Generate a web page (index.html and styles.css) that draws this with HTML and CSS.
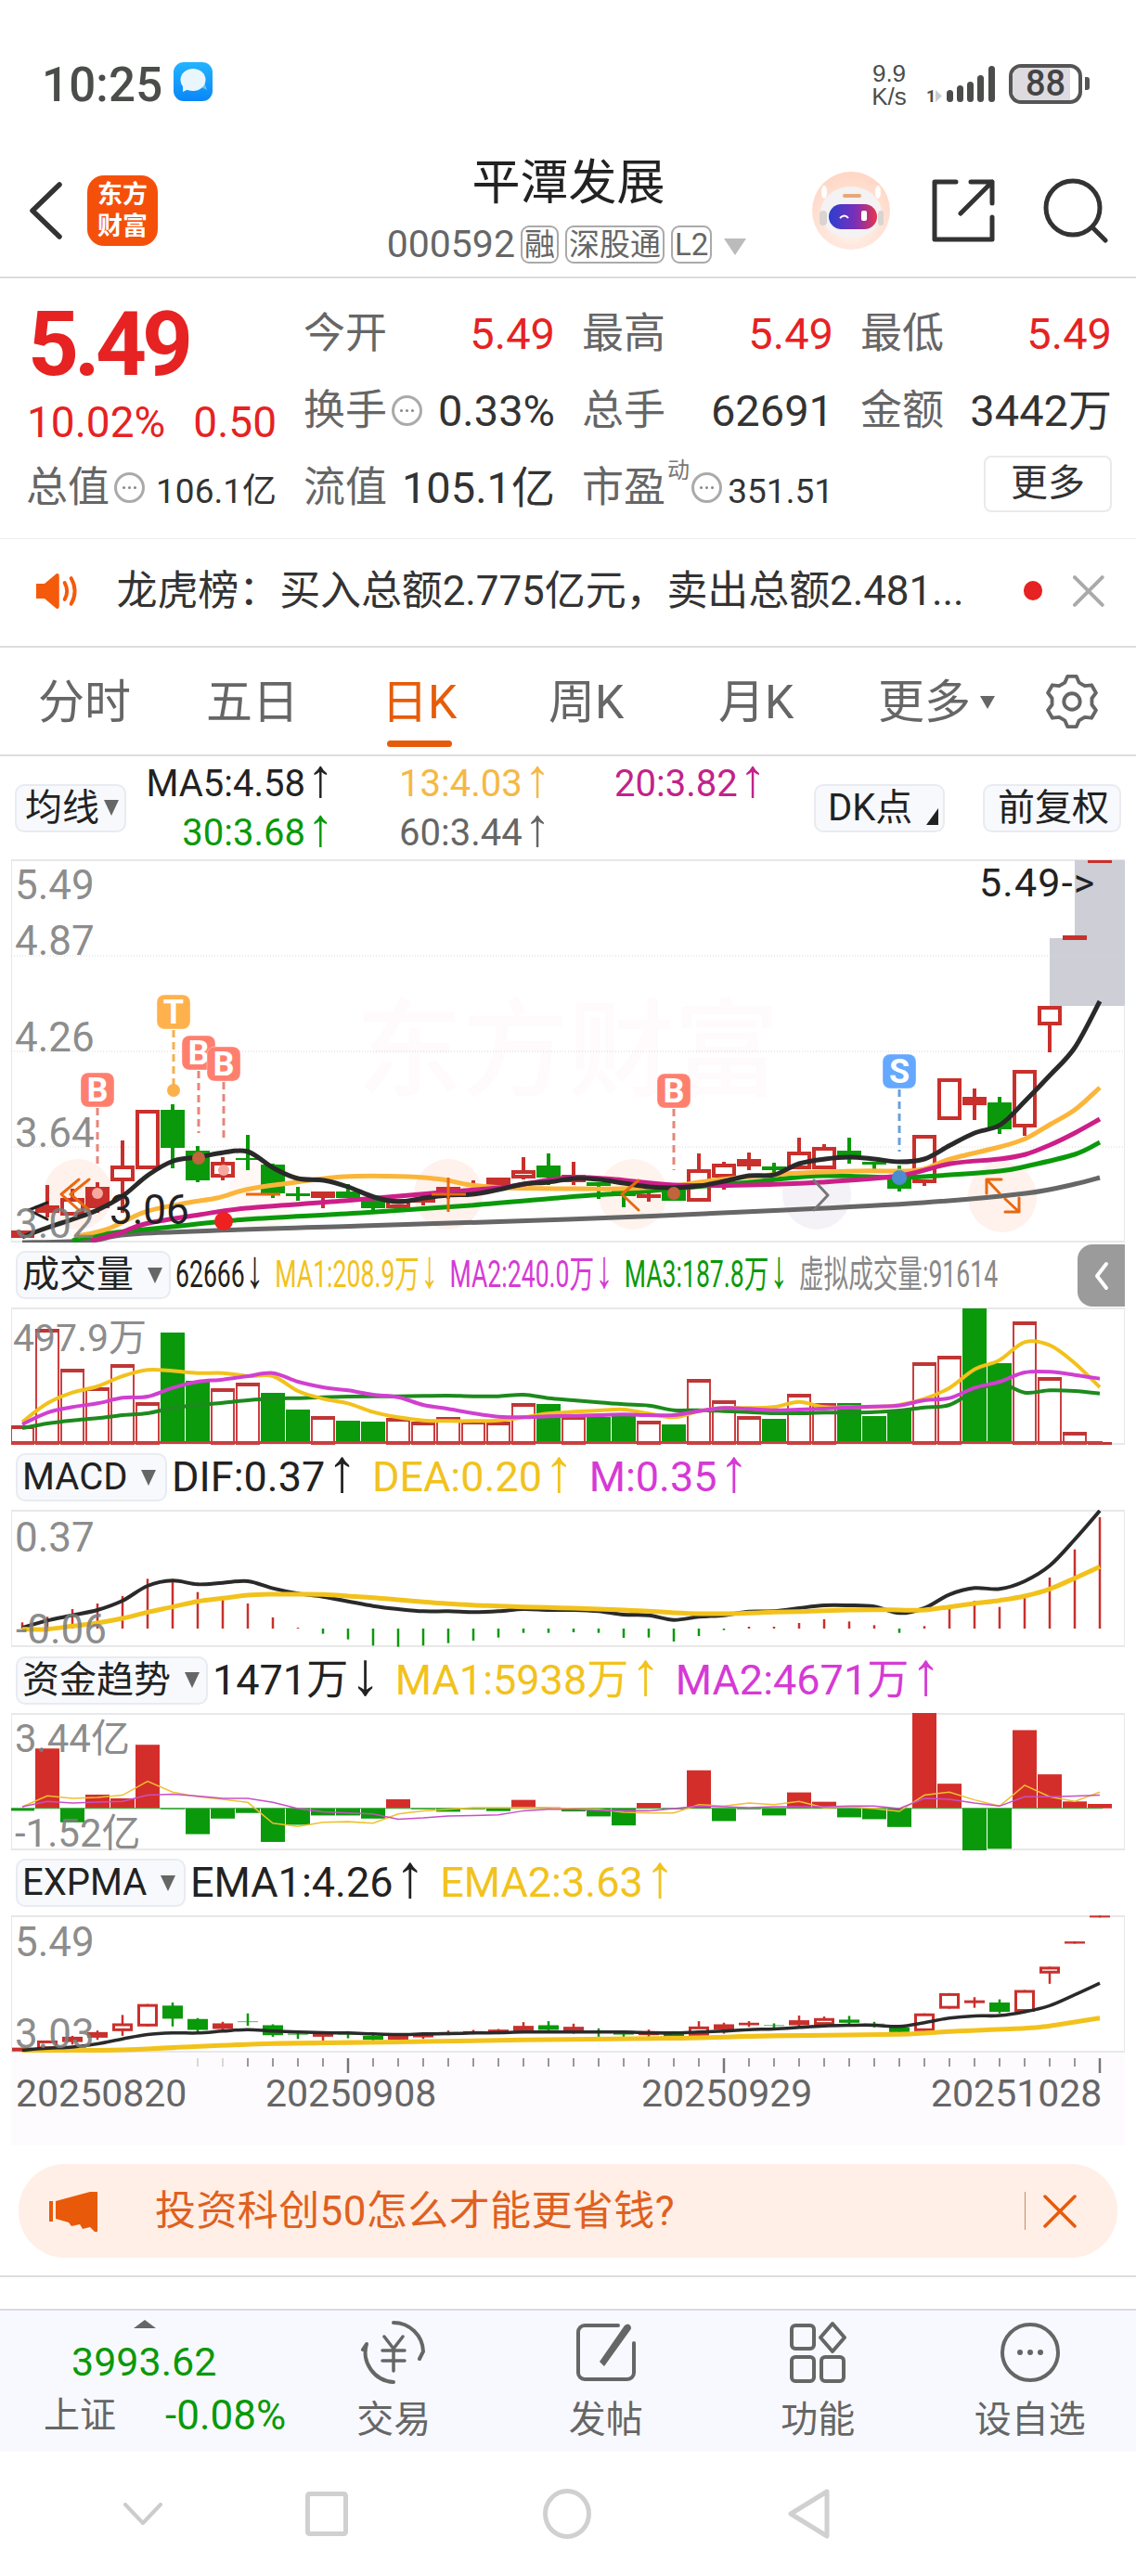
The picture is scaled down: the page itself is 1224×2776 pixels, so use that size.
FILE: index.html
```html
<!DOCTYPE html>
<html lang="zh-CN">
<head>
<meta charset="utf-8">
<title>平潭发展</title>
<link rel="stylesheet" href="styles.css">
</head>
<body>
<div class="page">
  <div class="status">
    <div class="status-left">
      <span class="clock">10:25</span>
      <svg class="msg" viewBox="0 0 42 42" width="42" height="42">
        <defs><linearGradient id="mg" x1="0" y1="0" x2="0" y2="1"><stop offset="0" stop-color="#22b4ff"/><stop offset="1" stop-color="#0a86f8"/></linearGradient></defs>
        <rect width="42" height="42" rx="11" fill="url(#mg)"/>
        <path d="M30 27l6 3-3-9z" fill="#5fc4f5"/>
        <ellipse cx="21" cy="19" rx="13.5" ry="12" fill="#eaf6fd"/>
        <path d="M10 25l0 7 8-4z" fill="#eaf6fd"/>
      </svg>
    </div>
    <div class="status-right">
      <div class="speed"><span>9.9</span><span>K/s</span></div>
      <svg class="signal" viewBox="994 70 78 44" width="78" height="44">
        <text x="998" y="111" class="sig-text">1</text>
        <path d="M1008 98l7 6.500-7 6.500z" fill="#ccc"/>
        <rect x="1020" y="98" width="7" height="13" rx="3.500" fill="#4a4d4a"/>
        <rect x="1031" y="93" width="7" height="18" rx="3.500" fill="#4a4d4a"/>
        <rect x="1042" y="89" width="7" height="22" rx="3.500" fill="#4a4d4a"/>
        <rect x="1053" y="82" width="7" height="29" rx="3.500" fill="#4a4d4a"/>
        <rect x="1065" y="72" width="7" height="39" rx="3.500" fill="#4a4d4a"/>
      </svg>
      <div class="battery"><span class="battery-level"></span><span class="battery-num">88</span></div>
      <span class="battery-tip"></span>
    </div>
  </div>

  <div class="nav">
    <div class="nav-left">
      <svg class="back" viewBox="0 0 36 62" width="36" height="62"><path d="M33 3L4 31l29 28" fill="none" stroke="#333" stroke-width="5.500" stroke-linecap="round" stroke-linejoin="round"/></svg>
      <div class="logo"><span>东方</span><span>财富</span></div>
    </div>
    <div class="nav-center">
      <div class="title">平潭发展</div>
      <div class="subtitle">
        <span class="code">000592</span>
        <span class="tag">融</span>
        <span class="tag">深股通</span>
        <span class="tag">L2</span>
        <span class="sub-caret"></span>
      </div>
    </div>
    <div class="nav-right">
      <svg class="robot" viewBox="0 0 84 84" width="84" height="84">
        <defs>
          <radialGradient id="rb" cx=".5" cy=".7" r=".7"><stop offset="0" stop-color="#fff4ee"/><stop offset="1" stop-color="#ffd6c4"/></radialGradient>
          <linearGradient id="rv" x1="0" y1="0" x2="1" y2="0"><stop offset="0" stop-color="#2b3fd0"/><stop offset=".55" stop-color="#7a2fb8"/><stop offset="1" stop-color="#e8344e"/></linearGradient>
        </defs>
        <circle cx="42" cy="42" r="42" fill="url(#rb)"/>
        <ellipse cx="13" cy="22" rx="3" ry="7" fill="#fff"/>
        <ellipse cx="71" cy="22" rx="3" ry="7" fill="#fff"/>
        <ellipse cx="42" cy="44" rx="33" ry="28" fill="#f4f2f2"/>
        <rect x="33" y="24" width="20" height="4" rx="2" fill="#e8a878"/>
        <rect x="18" y="35" width="52" height="27" rx="13.500" fill="url(#rv)"/>
        <rect x="8" y="42" width="8" height="16" rx="4" fill="#d8d4d2"/>
        <rect x="71" y="42" width="6" height="16" rx="3" fill="#d8d4d2"/>
        <path d="M30 50q5-5 9 0" fill="none" stroke="#fff" stroke-width="2"/>
        <rect x="53" y="42" width="6" height="11" rx="2" fill="#fff"/>
      </svg>
      <svg class="share" viewBox="0 0 70 70" width="70" height="70"><path d="M27 4H4v62h62V42M43 4h23v23M66 4L32 38" fill="none" stroke="#333" stroke-width="5" stroke-linecap="round" stroke-linejoin="round"/></svg>
      <svg class="search" viewBox="0 0 70 70" width="70" height="70"><circle cx="32" cy="32" r="29" fill="none" stroke="#333" stroke-width="5"/><path d="M53 53l14 14" stroke="#333" stroke-width="5" stroke-linecap="round"/></svg>
    </div>
  </div>

  <div class="quote">
    <div class="price-cell">
      <div class="price">5.49</div>
      <div class="change"><span>10.02%</span><span>0.50</span></div>
    </div>
    <div class="cell"><span class="lab">今开</span><span class="val up">5.49</span></div>
    <div class="cell"><span class="lab">最高</span><span class="val up">5.49</span></div>
    <div class="cell"><span class="lab">最低</span><span class="val up">5.49</span></div>
    <div class="cell"><span class="lab lab-icon">换手<i class="info"></i></span><span class="val">0.33%</span></div>
    <div class="cell"><span class="lab">总手</span><span class="val">62691</span></div>
    <div class="cell"><span class="lab">金额</span><span class="val">3442万</span></div>
    <div class="cell"><span class="lab lab-icon">总值<i class="info"></i></span><span class="val val-s">106.1亿</span></div>
    <div class="cell"><span class="lab">流值</span><span class="val">105.1亿</span></div>
    <div class="cell"><span class="lab lab-icon pe">市盈<sup class="dyn">动</sup><i class="info"></i></span><span class="val val-s">351.51</span></div>
    <div class="cell cell-end"><span class="more">更多</span></div>
  </div>

  <div class="ticker">
    <svg class="speaker" viewBox="0 0 48 40" width="48" height="40">
      <path d="M0 12h9L22 1q3-1 3 3v32q0 4-3 3L9 28H0z" fill="#f55a0a"/>
      <path d="M31 11q5 9 0 18M38 6q8 14 0 28" fill="none" stroke="#f55a0a" stroke-width="4" stroke-linecap="round"/>
    </svg>
    <span class="ticker-text">龙虎榜：买入总额2.775亿元，卖出总额2.481...</span>
    <span class="dot"></span>
    <svg class="close" viewBox="0 0 34 34" width="34" height="34"><path d="M2 2l30 30M32 2L2 32" stroke="#aaa" stroke-width="4" stroke-linecap="round"/></svg>
  </div>

  <div class="tabs">
    <span class="tab">分时</span>
    <span class="tab">五日</span>
    <span class="tab tab-on">日K</span>
    <span class="tab">周K</span>
    <span class="tab">月K</span>
    <span class="tab tab-more">更多<i class="caret-sm"></i></span>
    <svg class="gear" viewBox="0 0 60 60" width="58" height="58"><path d="M22 9L25 2H35L38 9L44.200 12.600L51.800 11.700L56.800 20.300L52.200 26.400V33.600L56.800 39.700L51.800 48.300L44.200 47.400L38 51L35 58H25L22 51L15.800 47.400L8.200 48.300L3.200 39.700L7.800 33.600V26.400L3.200 20.300L8.200 11.700L15.800 12.600Z" fill="none" stroke="#666" stroke-width="4" stroke-linejoin="round"/><circle cx="30" cy="30" r="9" fill="none" stroke="#666" stroke-width="4"/></svg>
  </div>

  <div class="ma-row">
    <span class="pill pill-ma">均线<i class="caret"></i></span>
    <div class="ma-grid">
      <span class="ma ma-first c-dark">MA5:4.58<b>↑</b></span>
      <span class="ma c-yellow">13:4.03<b>↑</b></span>
      <span class="ma c-pink">20:3.82<b>↑</b></span>
      <span class="ma ma-first c-green">30:3.68<b>↑</b></span>
      <span class="ma c-gray">60:3.44<b>↑</b></span>
    </div>
    <span class="pill pill-dk">DK点<i class="corner"></i></span>
    <span class="pill pill-fq">前复权</span>
  </div>

  <div class="chart chart-main">
    <div class="watermark">东方财富</div>
    <svg id="main" class="plot"></svg>
    <span class="lbl m1">5.49</span>
    <span class="lbl m2">4.87</span>
    <span class="lbl m3">4.26</span>
    <span class="lbl m4">3.64</span>
    <span class="lbl m5">3.02</span>
    <span class="lbl lbl-dark m6">3.06</span>
    <span class="lbl lbl-dark m7">5.49-&gt;</span>
  </div>

  <div class="ind-row ind-vol">
    <span class="pill pill-ind p-vol">成交量<i class="caret"></i></span>
    <div class="vol-legend">
      <span class="c-dark">62666<b>↓</b></span>
      <span class="c-yellow2">MA1:208.9万<b>↓</b></span>
      <span class="c-mag">MA2:240.0万<b>↓</b></span>
      <span class="c-green">MA3:187.8万<b>↓</b></span>
      <span class="c-gray2">虚拟成交量:91614</span>
    </div>
    <span class="collapse"><svg viewBox="0 0 16 32" width="16" height="32"><path d="M13 3L3 16l10 13" fill="none" stroke="#fff" stroke-width="4" stroke-linecap="round" stroke-linejoin="round"/></svg></span>
  </div>
  <div class="chart chart-sub">
    <svg id="vol" class="plot"></svg>
    <span class="lbl v1">497.9万</span>
  </div>

  <div class="ind-row">
    <span class="pill pill-ind p-macd">MACD<i class="caret"></i></span>
    <div class="legend">
      <span class="c-dark">DIF:0.37<b>↑</b></span>
      <span class="c-yellow2">DEA:0.20<b>↑</b></span>
      <span class="c-mag">M:0.35<b>↑</b></span>
    </div>
  </div>
  <div class="chart chart-sub">
    <svg id="macd" class="plot"></svg>
    <span class="lbl d1">0.37</span>
    <span class="lbl d2">-0.06</span>
  </div>

  <div class="ind-row ind-fund">
    <span class="pill pill-ind p-fund">资金趋势<i class="caret"></i></span>
    <div class="legend">
      <span class="c-dark">1471万<b>↓</b></span>
      <span class="c-yellow2">MA1:5938万<b>↑</b></span>
      <span class="c-mag">MA2:4671万<b>↑</b></span>
    </div>
  </div>
  <div class="chart chart-sub">
    <svg id="fund" class="plot"></svg>
    <span class="lbl f1">3.44亿</span>
    <span class="lbl f2">-1.52亿</span>
  </div>

  <div class="ind-row">
    <span class="pill pill-ind p-exp">EXPMA<i class="caret"></i></span>
    <div class="legend">
      <span class="c-dark">EMA1:4.26<b>↑</b></span>
      <span class="c-yellow2">EMA2:3.63<b>↑</b></span>
    </div>
  </div>
  <div class="chart chart-sub">
    <svg id="exp" class="plot"></svg>
    <span class="lbl e1">5.49</span>
    <span class="lbl e2">3.03</span>
  </div>

  <div class="axis">
    <svg id="ticks" class="plot"></svg>
    <span>20250820</span>
    <span>20250908</span>
    <span>20250929</span>
    <span>20251028</span>
  </div>

  <div class="banner">
    <svg class="horn" viewBox="0 0 53 44" width="53" height="44"><rect x="0" y="11" width="4" height="22" fill="#e85a0a"/><path d="M7 11L44 1h8v43h-3l-5-5-8 2-3-5-9 2-3-4-14-4z" fill="#e85a0a"/></svg>
    <span class="banner-text">投资科创50怎么才能更省钱?</span>
    <span class="banner-sep"></span>
    <svg class="banner-x" viewBox="0 0 36 36" width="36" height="36"><path d="M2 2l32 32M34 2L2 34" stroke="#e85a0a" stroke-width="3.500" stroke-linecap="round"/></svg>
  </div>

  <div class="gap-strip"></div>

  <div class="dock">
    <div class="index">
      <i class="index-caret"></i>
      <div class="index-val">3993.62</div>
      <div class="index-row"><span class="index-name">上证</span><span class="index-pct">-0.08%</span></div>
    </div>
    <div class="dock-item">
      <svg viewBox="0 0 72 70" width="72" height="70"><path d="M36 3A32 32 0 0 1 68 34l-4 8M36 67A32 32 0 0 1 7 26l-4 6" fill="none" stroke="#666" stroke-width="4" stroke-linecap="round" stroke-linejoin="round"/><path d="M26 18l10 13 10-13M24 33h24M24 44h24M36 31v24" fill="none" stroke="#666" stroke-width="3.500" stroke-linecap="round" stroke-linejoin="round"/></svg>
      <span>交易</span>
    </div>
    <div class="dock-item">
      <svg viewBox="0 0 70 70" width="70" height="70"><path d="M48 6H12a7 7 0 0 0-7 7v44a7 7 0 0 0 7 7h46a7 7 0 0 0 7-7V25" fill="none" stroke="#666" stroke-width="4" stroke-linecap="round"/><path d="M28 45L55 6q4-3 6 0t0 5L33 50z" fill="#666"/></svg>
      <span>发帖</span>
    </div>
    <div class="dock-item">
      <svg viewBox="0 0 70 70" width="70" height="70"><rect x="7" y="6" width="24" height="25" rx="4" fill="none" stroke="#666" stroke-width="4"/><path d="M51 4l13 15-13 15-13-15z" fill="none" stroke="#666" stroke-width="4" stroke-linejoin="round"/><rect x="7" y="40" width="24" height="26" rx="4" fill="none" stroke="#666" stroke-width="4"/><rect x="39" y="40" width="24" height="26" rx="4" fill="none" stroke="#666" stroke-width="4"/></svg>
      <span>功能</span>
    </div>
    <div class="dock-item">
      <svg viewBox="0 0 70 70" width="70" height="70"><circle cx="35" cy="35" r="30" fill="none" stroke="#666" stroke-width="4"/><circle cx="24" cy="35" r="3" fill="#666"/><circle cx="35" cy="35" r="3" fill="#666"/><circle cx="46" cy="35" r="3" fill="#666"/></svg>
      <span>设自选</span>
    </div>
  </div>

  <div class="sysnav">
    <svg viewBox="0 0 42 24" width="42" height="24"><path d="M2 2l19 20L40 2" fill="none" stroke="#ccc" stroke-width="4" stroke-linecap="round" stroke-linejoin="round"/></svg>
    <svg viewBox="0 0 46 48" width="46" height="48"><rect x="2.500" y="2.500" width="41" height="43" rx="2" fill="none" stroke="#d0d0d0" stroke-width="5"/></svg>
    <svg viewBox="0 0 52 54" width="52" height="54"><ellipse cx="26" cy="27" rx="23.500" ry="24.500" fill="none" stroke="#d0d0d0" stroke-width="5"/></svg>
    <svg viewBox="0 0 46 54" width="46" height="54"><path d="M42 3L3 27l39 24z" fill="none" stroke="#d0d0d0" stroke-width="5" stroke-linejoin="round"/></svg>
  </div>
</div>
<script src="charts.js"></script>
</body>
</html>
```

FILE: styles.css
```css
* { box-sizing: border-box; }
html, body { margin: 0; padding: 0; background: #fff; }
body { font-family: Roboto, "Noto Sans CJK SC", sans-serif; color: #333; }
.page { width: 1224px; height: 2776px; overflow: hidden; display: flex; flex-direction: column; }
i { font-style: normal; }

/* status */
.status { height: 150px; flex: none; display: flex; justify-content: space-between; padding: 62px 50px 0 45px; align-items: flex-start; }
.status-left { display: flex; align-items: center; gap: 12px; height: 60px; }
.clock { font-size: 51px; line-height: 60px; color: #4a4d4a; letter-spacing: .2px; font-weight: 500; }
.msg { margin-top: -8px; }
.status-right { display: flex; align-items: flex-start; margin-top: 7px; position: relative; }
.speed { width: 44px; display: flex; flex-direction: column; align-items: center; font-size: 26px; line-height: 25px; color: #4a4d4a; font-family: "Liberation Sans", sans-serif; margin-right: 14px; margin-top: -2px; }
.signal { margin-right: 15px; }
.sig-text { font: 700 18px Roboto, sans-serif; fill: #4a4d4a; }
.battery { width: 79px; height: 43px; border: 4px solid #555; border-radius: 13px; position: relative; overflow: hidden; display: flex; align-items: center; justify-content: center; }
.battery-level { position: absolute; left: 0; top: 0; bottom: 0; width: 88%; background: #dddbe0; }
.battery-num { position: relative; font-size: 38px; font-weight: 500; line-height: 35px; color: #444; }
.battery-tip { width: 5px; height: 14px; background: #555; border-radius: 0 3px 3px 0; margin: 14px 0 0 3px; }

/* nav */
.nav { height: 150px; flex: none; border-bottom: 2px solid #ddd; display: grid; grid-template-columns: 1fr auto 1fr; align-items: center; padding: 20px 30px 14px 31px; }
.nav-left { display: flex; align-items: center; gap: 27px; }
.logo { width: 76px; height: 76px; border-radius: 18px; background: #f5500a; color: #fff; display: flex; flex-direction: column; align-items: center; justify-content: center; font-size: 27px; font-weight: 700; line-height: 34px; }
.nav-center { display: flex; flex-direction: column; align-items: center; margin-left: -4px; }
.title { font-size: 52px; line-height: 56px; color: #222; margin-bottom: 17px; margin-left: 4px; }
.subtitle { display: flex; align-items: center; height: 41px; color: #666; }
.code { font-size: 41px; line-height: 41px; margin-right: 6px; }
.tag { font-size: 33px; line-height: 37px; height: 41px; border: 2px solid #aaa; border-radius: 9px; padding: 0 2px; margin-right: 7px; }
.sub-caret { width: 0; height: 0; border-left: 12px solid transparent; border-right: 12px solid transparent; border-top: 18px solid #bbb; margin: 4px 0 0 6px; }
.nav-right { display: flex; align-items: center; justify-content: flex-end; }
.robot { margin-right: 44px; }
.share { margin-right: 51px; }

/* quote */
.quote { height: 281px; flex: none; border-bottom: 1px solid #eee; padding: 18px 28px 0 29px; display: grid; grid-template-columns: 269px 270px 270px 270px; column-gap: 30px; grid-auto-rows: 83px; align-items: center; }
.price-cell { grid-row: 1 / span 2; align-self: start; }
.price { font-size: 96px; font-weight: 700; line-height: 70px; color: #e62222; letter-spacing: -5px; margin-top: 18px; margin-left: 1px; }
.change { display: flex; justify-content: space-between; font-size: 46px; line-height: 36px; color: #e62222; margin-top: 31px; }
.cell { display: flex; justify-content: space-between; align-items: center; }
.lab { font-size: 45px; line-height: 46px; color: #666; margin-left: -1px; }
.lab-icon { display: flex; align-items: center; }
.info { position: relative; width: 33px; height: 33px; margin-left: 5px; border: 3px solid #aaa; border-radius: 50%; }
.info::before { content: ""; position: absolute; left: 50%; top: 50%; width: 3px; height: 3px; margin: -1.5px; border-radius: 50%; background: #888; box-shadow: -6px 0 #888, 6px 0 #888; }
.val { font-size: 47px; line-height: 46px; color: #333; }
.val.up { color: #e62222; }
.val-s { font-size: 37px; padding-top: 8px; }
.pe .info { margin-left: 0; }
.dyn { font-size: 24px; line-height: 24px; color: #777; align-self: flex-start; margin: -8px 2px 0 2px; }
.cell-end { justify-content: flex-end; }
.more { width: 138px; height: 61px; border: 2px solid #eaeaea; border-radius: 8px; text-align: center; font-size: 40px; line-height: 55px; color: #333; margin-top: -8px; }

/* ticker */
.ticker { height: 117px; flex: none; border-bottom: 2px solid #ddd; display: flex; align-items: center; padding: 0 34px 4px 39px; }
.ticker-text { font-size: 44px; line-height: 50px; color: #333; margin-left: 39px; white-space: nowrap; width: 908px; letter-spacing: -.1px; }
.dot { width: 21px; height: 21px; border-radius: 50%; background: #e62222; margin-left: 69px; }
.close { margin-left: 33px; }

/* tabs */
.tabs { height: 117px; flex: none; border-bottom: 2px solid #ddd; display: grid; grid-template-columns: 181px 193px 176px 183px 172px 180px auto; align-items: center; padding-left: 41px; position: relative; }
.tab { font-size: 50px; line-height: 58px; color: #666; white-space: nowrap; padding-top: 2px; }
.tab-on { color: #e65c0a; margin-left: -4px; }
.tab-on::after { content: ""; position: absolute; left: 417px; top: 100px; width: 70px; height: 7px; border-radius: 4px; background: #e65c0a; }
.tab-more { display: flex; align-items: center; }
.caret-sm { width: 0; height: 0; border-left: 8px solid transparent; border-right: 8px solid transparent; border-top: 14px solid #666; margin-left: 10px; }
.gear { margin-top: 0; }

/* ma row */
.ma-row { height: 111px; flex: none; display: flex; align-items: center; padding-left: 16px; }
.pill { position: relative; display: inline-flex; align-items: center; height: 52px; background: #f7f9fd; border: 2px solid #e8ebf0; border-radius: 10px; font-size: 40px; line-height: 48px; color: #222; flex: none; white-space: nowrap; }
.caret { width: 0; height: 0; border-left: 8px solid transparent; border-right: 8px solid transparent; border-top: 17px solid #666; }
.pill-ma { width: 120px; padding-left: 9px; }
.pill-ma .caret { margin-left: 5px; }
.ma-grid { width: 669px; margin-left: 21px; margin-right: 51px; display: grid; grid-template-columns: 203px 162px 165px; column-gap: 70px; grid-auto-rows: 53px; align-items: center; }
.ma { font-size: 40px; line-height: 53px; white-space: nowrap; }
.ma-first { text-align: right; }
b { font-family: "Liberation Sans", sans-serif; font-weight: 400; font-size: 1.45em; line-height: 0; margin-left: 2px; }
.c-dark { color: #222; }
.c-yellow { color: #f5b845; }
.c-pink { color: #c2228a; }
.c-green { color: #0a990a; }
.c-gray { color: #666; }
.c-gray2 { color: #888; }
.c-yellow2 { color: #f2c21c; }
.c-mag { color: #d53ad5; }
.pill-dk { width: 141px; padding-left: 13px; }
.corner { position: absolute; right: 5px; bottom: 6px; width: 0; height: 0; border-left: 13px solid transparent; border-bottom: 18px solid #222; }
.pill-fq { width: 149px; margin-left: 41px; padding-left: 14px; }

/* charts */
.chart { position: relative; flex: none; width: 1200px; margin-left: 12px; background: #fff; }
.chart::after { content: ""; position: absolute; inset: 0; border: 1px solid #e8e8e8; border-top-width: 2px; border-bottom-width: 2px; pointer-events: none; }
.chart-main { height: 413px; }
.chart-sub { height: 148px; }
.plot { position: absolute; left: 0; top: 0; width: 100%; height: 100%; display: block; z-index: 1; }
.watermark { position: absolute; left: 372px; top: 150px; font-size: 114px; line-height: 114px; font-weight: 500; color: #fffafb; white-space: nowrap; }
.lbl { position: absolute; z-index: 2; left: 4px; font-size: 44px; line-height: 30px; color: rgba(125,125,125,.9); white-space: nowrap; }
.lbl-dark { color: #222; }
.m1 { top: 13px; } .m2 { top: 73px; } .m3 { top: 177px; } .m4 { top: 280px; } .m5 { top: 378px; }
.m6 { left: 106px; top: 363px; font-size: 44px; }
.m7 { left: 1043px; top: 10px; font-size: 43px; letter-spacing: 1.2px; }
.v1 { top: 18px; left: 2px; font-size: 41px; }
.d1 { top: 15px; }
.d2 { top: 114px; left: 5px; }
.f1 { top: 13px; font-size: 42px; }
.f2 { top: 115px; font-size: 42px; }
.e1 { top: 14px; }
.e2 { top: 113px; }

/* indicator rows */
.ind-row { height: 70px; flex: none; display: flex; align-items: center; padding-left: 17px; position: relative; }
.ind-vol { overflow: visible; }
.ind-fund { height: 71px; }
.pill-ind { padding-left: 5px; }
.pill-ind .caret { margin-left: 15px; }
.p-vol { width: 167px; } .p-macd { width: 163px; } .p-fund { width: 207px; } .p-exp { width: 183px; }
.legend { display: flex; font-size: 45px; line-height: 50px; white-space: nowrap; margin-left: 5px; gap: 16px; }
.vol-legend { display: flex; flex: none; gap: 18px; font-size: 40px; line-height: 50px; white-space: nowrap; margin-left: 5px; width: 1340px; transform: scaleX(.665); transform-origin: 0 50%; }
.collapse { position: absolute; right: 0; top: 2px; width: 51px; height: 67px; background: #9b9b9b; border-radius: 16px 0 0 16px; display: flex; align-items: center; justify-content: center; margin-right: 12px; z-index: 3; }

/* axis */
.axis { position: relative; flex: none; width: 1200px; height: 100px; margin-left: 12px; background: #fdfbfe; display: grid; grid-template-columns: 269px 405px 312px auto; padding: 29px 0 0 5px; font-size: 41px; line-height: 30px; color: #666; align-items: start; }
.axis span { position: relative; z-index: 2; }

/* banner */
.banner { height: 101px; flex: none; width: 1184px; margin: 20px 0 0 20px; background: #ffefe6; border-radius: 50px; display: flex; align-items: center; padding-left: 33px; }
.banner-text { font-size: 44px; line-height: 50px; color: #e06020; margin-left: 61px; width: 580px; letter-spacing: .4px; white-space: nowrap; }
.banner-sep { width: 1px; height: 41px; background: #c98a68; margin-left: 357px; }
.banner-x { margin-left: 19px; }

.gap-strip { height: 38px; flex: none; margin-top: 19px; border-top: 2px solid #ddd; border-bottom: 2px solid #d9dbe4; }

/* dock */
.dock { height: 152px; flex: none; background: #f7f9fe; display: grid; grid-template-columns: 310px repeat(4, 228.500px); }
.index { position: relative; padding: 38px 0 0 47px; }
.index-caret { position: absolute; left: 144px; top: 10px; width: 0; height: 0; border-left: 12px solid transparent; border-right: 12px solid transparent; border-bottom: 9px solid #666; }
.index-val { font-size: 43px; line-height: 34px; color: #0a990a; padding-left: 30px; }
.index-row { display: flex; margin-top: 21px; align-items: center; }
.index-name { font-size: 39px; line-height: 40px; color: #666; }
.index-pct { font-size: 44px; line-height: 40px; color: #0a990a; margin-left: 53px; }
.dock-item { display: flex; flex-direction: column; align-items: center; padding-top: 10px; }
.dock-item span { font-size: 40px; line-height: 44px; color: #666; margin-top: 16px; }

/* system nav */
.sysnav { flex: 1; display: grid; grid-template-columns: 196px 256px 264px auto; padding-left: 133px; align-items: center; justify-items: start; }
```

FILE: charts.js
```js
(function () {
  var RED = '#c9302c', GREEN = '#0a990a';
  function X(i) { return 24 + 27 * i; }

  function setup(id, x, y, w, h, body) {
    var el = document.getElementById(id);
    el.setAttribute('viewBox', x + ' ' + y + ' ' + w + ' ' + h);
    el.setAttribute('preserveAspectRatio', 'none');
    el.innerHTML = body;
  }
  function rect(x, y, w, h, fill, extra) {
    return '<rect x="' + x + '" y="' + y + '" width="' + w + '" height="' + h + '" fill="' + fill + '" ' + (extra || '') + '/>';
  }
  function line(x1, y1, x2, y2, c, w, extra) {
    return '<line x1="' + x1 + '" y1="' + y1 + '" x2="' + x2 + '" y2="' + y2 + '" stroke="' + c + '" stroke-width="' + w + '" ' + (extra || '') + '/>';
  }
  function smooth(pts, c, w) {
    var d = 'M' + pts[0][0] + ' ' + pts[0][1];
    for (var i = 0; i < pts.length - 1; i++) {
      var p0 = pts[i - 1] || pts[i], p1 = pts[i], p2 = pts[i + 1], p3 = pts[i + 2] || p2;
      d += 'C' + (p1[0] + (p2[0] - p0[0]) / 6).toFixed(1) + ' ' + (p1[1] + (p2[1] - p0[1]) / 6).toFixed(1) + ' ' +
        (p2[0] - (p3[0] - p1[0]) / 6).toFixed(1) + ' ' + (p2[1] - (p3[1] - p1[1]) / 6).toFixed(1) + ' ' + p2[0] + ' ' + p2[1];
    }
    return '<path d="' + d + '" fill="none" stroke="' + c + '" stroke-width="' + w + '" stroke-linejoin="round"/>';
  }
  function series(ys, base) {
    return ys.map(function (v, i) { return [X(i), base + v / 3]; });
  }
  function candles(list, bw, ww, sw) {
    return list.map(function (c) {
      var x = X(c[0]), hi = c[1], top = c[2], bot = c[3], lo = c[4], t = c[5];
      var col = t === 'g' ? GREEN : RED, s = line(x, hi, x, lo, col, ww);
      if (t === 'h') s += rect(x - bw / 2 + sw / 2, top + sw / 2, bw - sw, Math.max(bot - top - sw, 1), '#fff', 'stroke="' + col + '" stroke-width="' + sw + '"');
      else s += rect(x - bw / 2, top, bw, bot - top, col);
      return s;
    }).join('');
  }
  function poly(d, c, w) {
    return '<path d="' + d + '" fill="none" stroke="' + c + '" stroke-width="' + (w || 3) + '" stroke-linecap="round" stroke-linejoin="round"/>';
  }
  function badge(letter, x, y, fill, lineCol, y2) {
    return line(x, y + 38, x, y2, lineCol, 3, 'stroke-dasharray="8 5"') +
      '<rect x="' + (x - 18) + '" y="' + y + '" width="36" height="37" rx="8" fill="' + fill + '" stroke="#fff" stroke-opacity=".4"/>' +
      '<text x="' + x + '" y="' + (y + 31) + '" text-anchor="middle" font-family="Roboto, sans-serif" font-weight="700" font-size="36" fill="#fff">' + letter + '</text>';
  }
  function dot(x, y, r, c) { return '<circle cx="' + x + '" cy="' + y + '" r="' + r + '" fill="' + c + '"/>'; }

  /* ---------- main k-line ---------- */
  var mainC = [
    [0, 1327, 1327, 1335, 1335, 'r'], [1, 1278, 1300, 1308, 1313, 'r'], [2, 1282, 1292, 1311, 1311, 'h'],
    [3, 1275, 1280, 1303, 1308, 'r'], [4, 1230, 1257, 1274, 1308, 'h'], [5, 1197, 1197, 1261, 1261, 'h'],
    [6, 1191, 1197, 1238, 1260, 'g'], [7, 1236, 1241, 1273, 1275, 'g'], [8, 1248, 1253, 1270, 1273, 'h'],
    [9, 1224, 1249, 1251, 1262, 'g'], [10, 1255, 1256, 1287, 1292, 'g'], [11, 1280, 1287, 1290, 1295, 'g'],
    [12, 1285, 1285, 1292, 1303, 'r'], [13, 1277, 1285, 1292, 1292, 'g'], [14, 1289, 1293, 1303, 1309, 'g'],
    [15, 1293, 1293, 1303, 1303, 'h'], [16, 1293, 1293, 1297, 1300, 'r'], [17, 1280, 1280, 1290, 1293, 'r'],
    [18, 1273, 1282, 1288, 1288, 'r'], [19, 1270, 1270, 1278, 1278, 'r'], [20, 1248, 1262, 1271, 1272, 'h'],
    [21, 1244, 1257, 1270, 1278, 'g'], [22, 1253, 1267, 1275, 1278, 'r'], [23, 1275, 1275, 1279, 1293, 'g'],
    [24, 1283, 1283, 1290, 1302, 'g'], [25, 1280, 1288, 1292, 1296, 'r'], [26, 1283, 1283, 1295, 1295, 'g'],
    [27, 1244, 1261, 1296, 1296, 'h'], [28, 1253, 1255, 1270, 1283, 'h'], [29, 1243, 1250, 1258, 1262, 'r'],
    [30, 1254, 1258, 1262, 1267, 'g'], [31, 1227, 1242, 1261, 1261, 'h'], [32, 1234, 1237, 1261, 1261, 'h'],
    [33, 1227, 1241, 1248, 1255, 'g'], [34, 1253, 1253, 1256, 1262, 'g'], [35, 1257, 1272, 1282, 1285, 'g'],
    [36, 1224, 1224, 1276, 1279, 'h'], [37, 1163, 1163, 1208, 1208, 'h'], [38, 1174, 1183, 1192, 1208, 'r'],
    [39, 1183, 1189, 1218, 1223, 'g'], [40, 1154, 1154, 1216, 1225, 'h'], [41, 1085, 1085, 1106, 1135, 'h'],
    [42, 1009, 1009, 1014, 1014, 'r'], [43, 928, 928, 931, 931, 'r']
  ];
  var ma5 = [[24,1334],[51,1324],[78,1315],[105,1305],[132,1290],[160,1267],[187,1252],[214,1248],[241,1243],[267,1242],[295,1260],[321,1271],[349,1273],[375,1280],[403,1291],[429,1296],[457,1292],[483,1289],[509,1288],[537,1283],[564,1277],[591,1275],[618,1271],[645,1272],[672,1276],[699,1280],[726,1281],[753,1279],[780,1274],[807,1268],[834,1267],[861,1255],[889,1250],[915,1248],[942,1250],[969,1253],[996,1250],[1024,1235],[1050,1222],[1078,1213],[1105,1187],[1131,1160],[1158,1130],[1185,1080]];
  var ma13 = [[84,1333],[117,1325],[156,1307],[203,1297],[234,1292],[265,1283],[304,1277],[371,1269],[441,1269],[476,1272],[507,1278],[546,1281],[612,1282],[670,1282],[725,1279],[768,1273],[846,1266],[924,1263],[969,1263],[995,1261],[1024,1250],[1077,1237],[1105,1228],[1131,1213],[1158,1197],[1185,1173]];
  var ma20 = [[98,1338],[129,1330],[156,1320],[215,1310],[265,1303],[371,1295],[488,1285],[546,1280],[612,1270],[663,1272],[726,1278],[807,1278],[885,1275],[969,1268],[1024,1255],[1077,1250],[1105,1245],[1131,1235],[1158,1222],[1185,1207]];
  var ma30 = [[78,1338],[117,1330],[195,1322],[265,1315],[390,1308],[507,1300],[612,1291],[670,1287],[726,1282],[807,1275],[885,1268],[969,1270],[1024,1267],[1077,1263],[1105,1258],[1158,1245],[1185,1232]];
  var ma60 = [[24,1340],[98,1338],[156,1330],[390,1322],[612,1315],[846,1305],[995,1297],[1105,1287],[1158,1277],[1185,1270]];

  function halo(x, y, c) { return '<ellipse cx="' + x + '" cy="' + y + '" rx="37" ry="38" fill="' + c + '"/>'; }
  var OR = '#e8690f';
  var main = rect(1131, 1012, 81, 73, '#cdced6') + rect(1158, 928, 54, 84, '#cdced6') +
    [1031, 1134, 1237].map(function (y) { return line(12, y, 1212, y, '#d8d8d8', 1, 'stroke-dasharray="1 2"'); }).join('') +
    halo(84, 1288, '#fff1ec') + halo(283, 1288, '#fff8f5') + halo(483, 1288, '#fff1ec') + halo(682, 1288, '#fff3ee') + halo(880, 1288, '#f5f2f7') + halo(1080, 1291, '#fff1ec') +
    candles(mainC, 26, 4, 4) +
    smooth(ma60, '#666', 5) + smooth(ma30, GREEN, 5) + smooth(ma13, '#fbb53a', 5) + smooth(ma20, '#cc1f88', 5) + smooth(ma5, '#2a2a2a', 5) +
    poly('M85 1272L66 1288L85 1305M96 1272L76 1288L96 1305', OR) +
    poly('M51 1297L31 1305L51 1315', '#222') +
    line(265, 1288, 302, 1288, OR, 3) + line(465, 1288, 502, 1288, OR, 3) + line(483, 1270, 483, 1307, OR, 3) +
    poly('M688 1273L670 1288L688 1305', OR) + poly('M877 1273L892 1289L877 1305', '#777') +
    poly('M1063 1287V1272H1079M1063 1272L1077 1287M1098 1292V1307H1083M1098 1307L1083 1293', OR) +
    dot(105, 1287, 6, '#f6a9a0') + dot(241, 1317, 10, '#ee2020') + dot(214, 1249, 7, '#c0653c') + dot(241, 1262, 6, '#f4a8a0') + dot(726, 1287, 7, '#c0653c') + dot(969, 1270, 8, '#4a8ecf') +
    dot(187, 1176, 7, '#fbb04a') +
    badge('B', 105, 1157, '#ff7f6f', '#e8857a', 1260) + badge('T', 187, 1073, '#ffb14d', '#f5b050', 1175) +
    badge('B', 214, 1117, '#ff7f6f', '#e8857a', 1222) + badge('B', 241, 1129, '#ff7f6f', '#e8857a', 1232) +
    badge('B', 726, 1158, '#ff7f6f', '#e8857a', 1262) + badge('S', 969, 1137, '#64a8ff', '#6a9fdc', 1242);
  setup('main', 12, 927, 1200, 413, main);

  /* ---------- volume ---------- */
  var volB = [[1537,'h'],[1433,'h'],[1476,'h'],[1496,'h'],[1471,'h'],[1512,'h'],[1437,'g'],[1489,'g'],[1497,'h'],[1491,'h'],[1502,'g'],[1520,'g'],[1527,'h'],[1532,'g'],[1533,'g'],[1529,'h'],[1533,'h'],[1528,'h'],[1532,'h'],[1533,'h'],[1513,'h'],[1514,'g'],[1527,'h'],[1528,'g'],[1525,'g'],[1532,'h'],[1536,'g'],[1487,'h'],[1510,'h'],[1527,'h'],[1530,'g'],[1503,'h'],[1513,'h'],[1513,'g'],[1527,'g'],[1520,'g'],[1469,'h'],[1462,'h'],[1411,'g'],[1470,'g'],[1425,'h'],[1485,'h'],[1544,'h'],[1555,'h']];
  var volS = volB.map(function (b, i) {
    var x = X(i) - 13, top = b[0];
    if (b[1] === 'g') return rect(x, top, 26, 1557 - top, GREEN);
    return rect(x + 1, top + 1, 24, 1557 - top - 1, '#fff', 'stroke="#cc3f3f" stroke-width="2"') + rect(x, top, 26, 4, '#bf3636');
  }).join('') + rect(12, 1554, 1176, 3, '#c94040');
  var v1 = [580,520,485,465,432,412,415,422,422,432,432,480,505,520,548,565,575,577,577,575,565,553,547,543,540,553,565,545,535,535,532,515,532,532,532,525,505,470,410,380,322,332,390,468];
  var v2 = [588,550,532,520,502,498,470,450,443,432,422,450,468,478,492,500,525,538,552,563,565,562,560,558,556,558,558,545,535,538,542,540,537,533,530,527,510,503,470,450,420,418,428,440];
  var v3 = [600,585,575,568,558,552,535,525,518,510,505,503,500,498,497,497,496,495,497,497,492,503,510,517,523,527,542,542,545,548,552,552,550,550,548,543,533,525,480,455,485,478,480,488];
  setup('vol', 12, 1410, 1200, 148, volS + smooth(series(v3, 1340), '#1d8a1d', 4) + smooth(series(v1, 1340), '#f2c21c', 4) + smooth(series(v2, 1340), '#d040d0', 4));

  /* ---------- macd ---------- */
  var mb = [268,250,225,207,183,127,133,170,192,207,252,285,305,323,343,347,343,335,327,317,302,302,300,302,318,317,330,312,293,282,282,270,258,265,277,302,280,215,198,218,188,123,32,-72];
  var Z = 288;
  var macd = mb.map(function (v, i) {
    var x = X(i), up = v < Z, green = !up;
    return line(x, 1660 + Z / 3, x, 1660 + v / 3, green ? GREEN : '#c9302c', 2.5);
  }).join('');
  var dif = [285,262,245,228,198,150,133,145,140,135,158,175,185,200,215,225,232,232,235,232,225,228,228,232,243,245,260,250,245,233,232,222,213,213,217,238,222,178,157,160,135,85,0,-93];
  var dea = [290,290,280,270,255,235,218,200,190,180,177,177,178,183,188,195,202,208,212,215,218,220,222,225,228,232,237,240,240,238,235,233,230,228,227,228,228,218,207,197,183,160,125,88];
  setup('macd', 12, 1628, 1200, 148, macd + smooth(series(dif, 1660), '#2a2a2a', 4) + smooth(series(dea, 1660), '#f2c21c', 5));

  /* ---------- fund flow ---------- */
  var fb = [875,675,912,823,835,663,870,950,900,882,975,920,890,890,900,838,870,878,870,876,840,864,877,893,922,850,870,745,908,870,890,816,846,896,902,927,560,788,1002,997,616,758,845,853];
  var F0 = 867;
  var fund = fb.map(function (v, i) {
    var x = X(i) - 13, up = v < F0;
    var a = 1660 + Math.min(v, F0) / 3, b = 1660 + Math.max(v, F0) / 3;
    return rect(x, a, 26, Math.max(b - a, 1), up ? '#d42e2a' : GREEN);
  }).join('') + line(12, 1949, 1188, 1949, '#3aa03a', 1);
  var fy = [862,827,835,832,825,780,815,830,838,848,915,925,912,910,915,885,875,870,865,865,865,865,868,870,880,882,882,855,860,850,855,845,865,862,868,877,825,815,840,860,793,830,845,815];
  var fm = [862,845,850,847,845,825,822,828,835,835,848,868,878,882,885,902,898,892,890,888,875,870,870,873,875,875,868,860,862,865,862,862,862,860,860,868,835,838,850,860,830,830,828,825];
  function thin(ys, c) {
    return '<polyline points="' + series(ys, 1660).map(function (p) { return p[0] + ',' + p[1]; }).join(' ') + '" fill="none" stroke="' + c + '" stroke-width="1.5"/>';
  }
  setup('fund', 12, 1847, 1200, 147, fund + thin(fy, '#eec030') + thin(fm, '#c850c8'));

  /* ---------- expma ---------- */
  var e = [
    [0,650,650,662,662,'r'],[1,627,627,655,660,'h'],[2,612,615,632,640,'h'],[3,595,600,618,625,'h'],[4,545,572,597,612,'h'],[5,510,510,582,582,'h'],
    [6,505,515,557,582,'g'],[7,555,558,593,598,'g'],[8,567,572,590,595,'h'],[9,540,566,568,580,'g'],[10,575,578,610,615,'g'],[11,597,605,608,622,'g'],
    [12,605,605,615,628,'r'],[13,597,605,608,620,'g'],[14,607,612,625,630,'g'],[15,610,610,625,628,'h'],[16,605,605,617,622,'h'],[17,595,600,605,610,'r'],
    [18,593,597,605,607,'r'],[19,590,592,605,607,'r'],[20,568,580,597,600,'r'],[21,565,578,593,600,'g'],[22,573,583,597,605,'r'],[23,588,595,598,615,'g'],
    [24,595,598,608,622,'g'],[25,592,597,610,618,'h'],[26,597,602,615,618,'g'],[27,565,582,612,620,'h'],[28,570,575,592,605,'h'],[29,565,570,578,583,'r'],
    [30,572,578,580,592,'g'],[31,547,562,578,582,'h'],[32,550,555,577,585,'h'],[33,548,560,570,577,'g'],[34,567,573,575,585,'g'],[35,578,585,600,605,'g'],
    [36,540,540,597,600,'h'],[37,475,475,525,525,'h'],[38,488,498,507,522,'r'],[39,495,505,535,540,'g'],[40,465,465,535,535,'h'],[41,390,390,412,445,'h'],
    [42,309,309,316,316,'r'],[43,226,226,232,232,'r']
  ].map(function (c) { return [c[0], 1990 + c[1] / 3, 1990 + c[2] / 3, 1990 + c[3] / 3, 1990 + c[4] / 3, c[5]]; });
  var eb = [658,652,648,638,622,608,603,603,597,592,597,600,602,603,606,608,606,605,603,602,600,600,600,600,600,602,603,600,597,592,590,585,580,578,578,582,570,555,548,547,535,515,480,443];
  var ey = [[0,660],[4,657],[6,650],[10,637],[15,632],[20,625],[26,620],[30,612],[35,607],[37,598],[40,588],[41,580],[43,555]].map(function (p) { return [X(p[0]), 1990 + p[1] / 3]; });
  setup('exp', 12, 2065, 1200, 147, candles(e, 22, 2.5, 3) + smooth(ey, '#f2c21c', 5) + smooth(series(eb, 1990), '#2a2a2a', 3.5));

  /* ---------- ticks ---------- */
  var t = '';
  for (var i = 7; i < 44; i++) {
    var major = i === 13 || i === 28 || i === 43;
    t += line(X(i), 6, X(i), major ? 22 : 15, i < 9 ? '#ccc' : '#777', major ? 2.5 : 1.5);
  }
  setup('ticks', 12, 0, 1200, 100, t);
})();
```
